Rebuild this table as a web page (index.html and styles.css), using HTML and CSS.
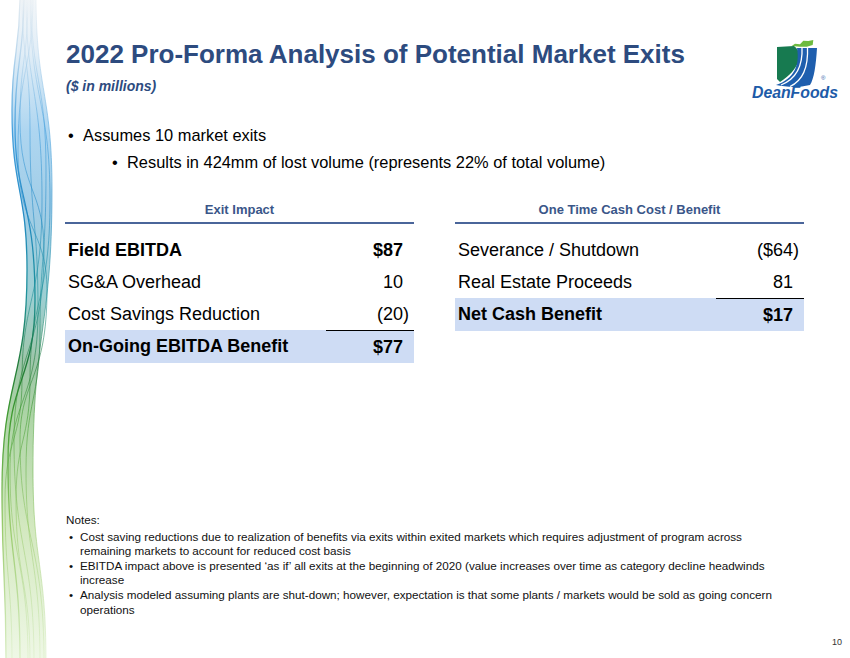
FILE: index.html
```html
<!DOCTYPE html>
<html>
<head>
<meta charset="utf-8">
<link rel="stylesheet" href="styles.css">
</head>
<body>
<div class="slide">
  <svg class="ribbon" viewBox="0 0 70 658" preserveAspectRatio="none">
    <defs>
      <linearGradient id="rg" gradientUnits="userSpaceOnUse" x1="0" y1="0" x2="0" y2="658">
        <stop offset="0" stop-color="#e2eaf0"/>
        <stop offset="0.08" stop-color="#b9d6ec"/>
        <stop offset="0.2" stop-color="#3d9cdc"/>
        <stop offset="0.32" stop-color="#1f88c4"/>
        <stop offset="0.45" stop-color="#168d96"/>
        <stop offset="0.55" stop-color="#187633"/>
        <stop offset="0.63" stop-color="#3a982a"/>
        <stop offset="0.8" stop-color="#96c968"/>
        <stop offset="1" stop-color="#d8edc2"/>
      </linearGradient>
    </defs>
    <path class="sheet" d="M20,-5 C20,52 12,52 12,110 C12,190 27,190 27,270 C27,380 2,380 2,490 C2,574 6,574 6,663 L46,663 C46,564 33,564 33,470 C33,330 52,330 52,190 C52,92 36,92 36,-5 Z"/>
    <g class="strands">
      <path class="edge" d="M20,-5 C20,52 12,52 12,110 C12,190 27,190 27,270 C27,380 2,380 2,490 C2,574 6,574 6,663"/>
      <path d="M36,-5 C36,92 52,92 52,190 C52,330 33,330 33,470 C33,564 46,564 46,663"/>
      <path class="edge" d="M24,-5 C24,60 15,60 15,125 C15,200 35,200 35,300 C35,380 8,380 8,460 C8,560 20,560 20,663"/>
      <path d="M28,-5 C28,60 20,60 20,120 C20,190 44,190 44,250 C44,350 14,350 14,440 C14,550 34,550 34,663"/>
      <path d="M31,-5 C31,80 46,80 46,170 C46,260 40,260 40,330 C40,400 26,400 26,470 C26,560 40,560 40,663"/>
      <path d="M26,-5 C26,90 42,90 42,200 C42,300 22,300 22,380 C22,440 5,440 5,500 C5,580 12,580 12,663"/>
      <path d="M33,-5 C33,70 18,70 18,150 C18,230 47,230 47,290 C47,380 20,380 20,440 C20,540 44,540 44,663"/>
      <path d="M22,-5 C22,60 30,60 30,130 C30,220 38,220 38,310 C38,400 10,400 10,470 C10,560 28,560 28,663"/>
      <path d="M30,-5 C30,100 50,100 50,200 C50,300 30,300 30,380 C30,440 16,440 16,500 C16,580 30,580 30,663"/>
    </g>
  </svg>

  <div class="content">
    <header class="head">
      <div class="titles">
        <h1 class="title">2022 Pro-Forma Analysis of Potential Market Exits</h1>
        <p class="sub">($ in millions)</p>
      </div>
      <svg class="logo" viewBox="0 0 90 70">
        <path fill="#6dbb3f" d="M41.7,11 L45,8.7 L50,9.3 L53.3,5.7 L58.3,6 L63.3,5 L62.7,10 L56.7,11.7 L50,11.7 Z"/>
        <path fill="#177a50" d="M27,12 L44,11 C54,18 50,34 30,47 L27,44 Z"/>
        <path fill="#1f5fae" d="M47,13 L67,13 C66,30 64,44 60,50 C48,53 36,52 26,50 C44,44 50,30 47,13 Z"/>
        <path fill="none" stroke="#fff" stroke-width="1.3" d="M52,12 C53,32 46,44 31,50"/>
        <path fill="none" stroke="#fff" stroke-width="1.3" d="M57.5,12 C58.5,34 52,46 40,51.5"/>
        <text x="71" y="45" class="reg">®</text>
        <text x="2" y="62.5" class="brand" textLength="86" lengthAdjust="spacingAndGlyphs">DeanFoods</text>
      </svg>
    </header>

    <div class="bullets">
      <div class="b1"><span class="dot">•</span><span>Assumes 10 market exits</span></div>
      <div class="b2"><span class="dot">•</span><span>Results in 424mm of lost volume (represents 22% of total volume)</span></div>
    </div>

    <div class="tables">
      <div class="tbl">
        <div class="th">Exit Impact</div>
        <div class="rows">
          <div class="row strong"><span class="lbl">Field EBITDA</span><span class="v">$87</span></div>
          <div class="row"><span class="lbl">SG&amp;A Overhead</span><span class="v">10</span></div>
          <div class="row"><span class="lbl">Cost Savings Reduction</span><span class="v"><span class="neg">(20)</span></span></div>
          <div class="row strong total"><span class="lbl">On-Going EBITDA Benefit</span><span class="v">$77</span></div>
        </div>
      </div>
      <div class="tbl">
        <div class="th">One Time Cash Cost / Benefit</div>
        <div class="rows">
          <div class="row"><span class="lbl">Severance / Shutdown</span><span class="v"><span class="neg">($64)</span></span></div>
          <div class="row"><span class="lbl">Real Estate Proceeds</span><span class="v">81</span></div>
          <div class="row strong total"><span class="lbl">Net Cash Benefit</span><span class="v">$17</span></div>
        </div>
      </div>
    </div>

    <div class="notes">
      <div class="nh">Notes:</div>
      <div class="ni"><span class="nd">•</span><span>Cost saving reductions due to realization of benefits via exits within exited markets which requires adjustment of program across remaining markets to account for reduced cost basis</span></div>
      <div class="ni"><span class="nd">•</span><span>EBITDA impact above is presented ‘as if’ all exits at the beginning of 2020 (value increases over time as category decline headwinds increase</span></div>
      <div class="ni"><span class="nd">•</span><span>Analysis modeled assuming plants are shut-down; however, expectation is that some plants / markets would be sold as going concern operations</span></div>
    </div>

    <div class="pnum">10</div>
  </div>
</div>
</body>
</html>
```

FILE: styles.css
```css
html, body {
  margin: 0;
  padding: 0;
  background: #ffffff;
}

.slide {
  position: relative;
  width: 850px;
  height: 658px;
  overflow: hidden;
  background: #ffffff;
  font-family: "Liberation Sans", Arial, sans-serif;
  color: #000000;
}

.ribbon {
  position: absolute;
  left: 0;
  top: 0;
  width: 70px;
  height: 658px;
}

.ribbon .sheet {
  fill: url(#rg);
  opacity: 0.42;
}

.ribbon .strands path {
  fill: none;
  stroke: url(#rg);
  stroke-width: 0.8;
  opacity: 0.7;
}

.ribbon .strands path.edge {
  stroke-width: 1.3;
  opacity: 0.95;
}

.content {
  position: relative;
  height: 658px;
  box-sizing: border-box;
  padding-left: 66px;
  display: flex;
  flex-direction: column;
}

.head {
  height: 95px;
  display: flex;
  justify-content: space-between;
  align-items: flex-start;
}

.titles {
  margin-top: 39px;
}

.title {
  margin: 0;
  font-size: 26px;
  line-height: 30px;
  font-weight: bold;
  color: #2d4b7f;
  white-space: nowrap;
}

.sub {
  margin: 8px 0 0;
  font-size: 14px;
  line-height: 18px;
  font-weight: bold;
  font-style: italic;
  color: #2d4b7f;
}

.logo {
  width: 90px;
  height: 70px;
  margin-top: 35px;
  margin-right: 10px;
  flex: none;
}

.logo .brand {
  font-family: "Liberation Sans", Arial, sans-serif;
  font-size: 16px;
  font-weight: bold;
  font-style: italic;
  fill: #1d5ba8;
}

.logo .reg {
  font-family: "Liberation Sans", Arial, sans-serif;
  font-size: 6px;
  fill: #1d5ba8;
}

.bullets {
  margin-top: 30px;
  font-size: 16.4px;
  line-height: 20px;
}

.b1, .b2 {
  display: flex;
}

.b2 {
  margin-top: 7px;
  padding-left: 44px;
}

.dot {
  width: 17px;
  padding-left: 2px;
  box-sizing: border-box;
  flex: none;
}

.tables {
  display: flex;
  gap: 41px;
  margin-top: 30px;
  margin-left: -1px;
}

.tbl {
  width: 349px;
}

.th {
  text-align: center;
  font-size: 13px;
  line-height: 16px;
  font-weight: bold;
  color: #3a5689;
  padding-bottom: 4px;
  border-bottom: 2px solid #4a659a;
}

.rows {
  margin-top: 10px;
}

.row {
  display: flex;
  height: 32px;
  align-items: center;
  font-size: 18px;
}

.row.strong {
  font-weight: bold;
}

.lbl {
  flex: 1;
  padding-left: 3px;
  white-space: nowrap;
}

.v {
  width: 88px;
  align-self: stretch;
  box-sizing: border-box;
  padding-right: 11px;
  display: flex;
  align-items: center;
  justify-content: flex-end;
}

.neg {
  margin-right: -6px;
}

.row.total {
  height: 33px;
  background: #cedcf4;
}

.row.total .v {
  border-top: 1.5px solid #000000;
}

.notes {
  margin-top: 150px;
  width: 724px;
  font-size: 11.7px;
  line-height: 14.6px;
  color: #111111;
}

.nh {
  margin-bottom: 2px;
}

.ni {
  display: flex;
}

.nd {
  width: 14px;
  padding-left: 3px;
  box-sizing: border-box;
  flex: none;
}

.pnum {
  margin-top: auto;
  align-self: flex-end;
  margin-right: 8px;
  margin-bottom: 10px;
  font-size: 9px;
  line-height: 12px;
  color: #333333;
}
```
